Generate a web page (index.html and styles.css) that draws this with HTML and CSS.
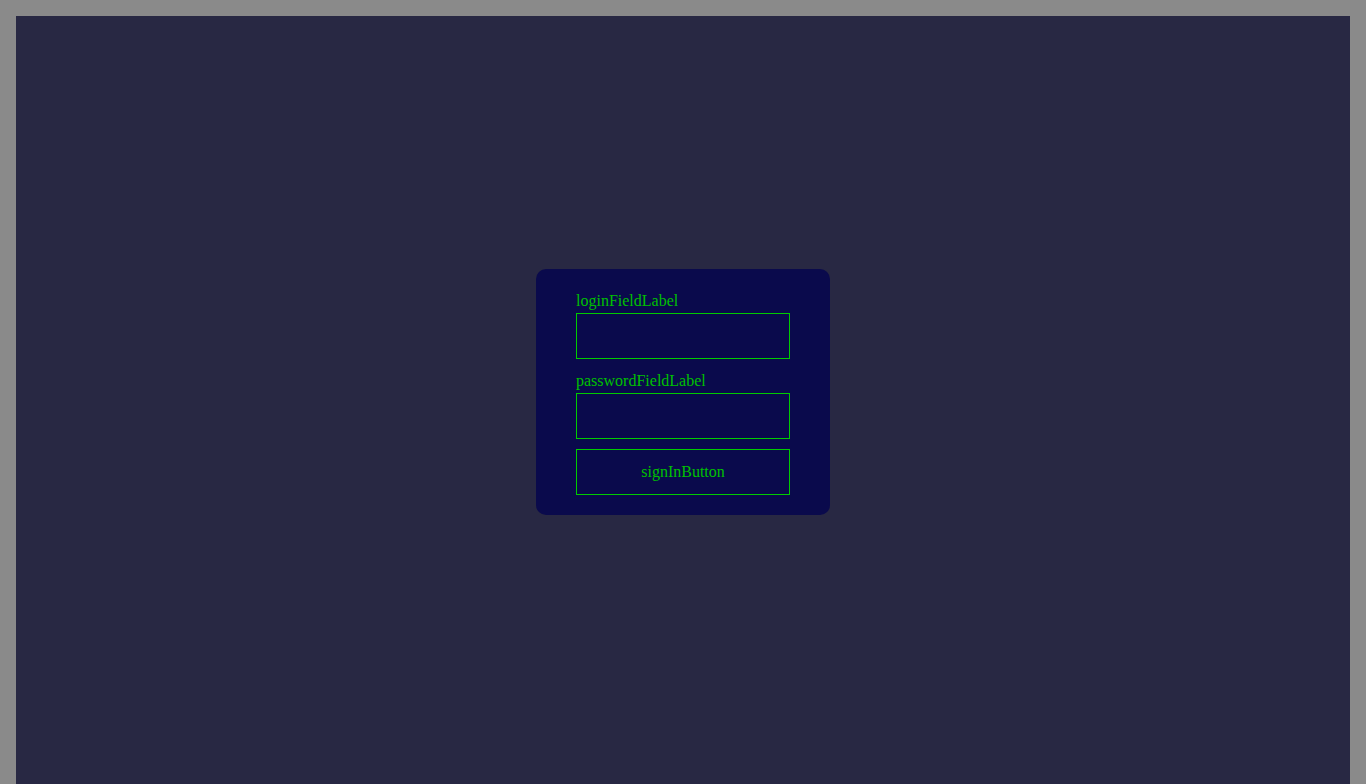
FILE: index.html
```html
<!DOCTYPE html>
<html lang="en">
<head>
<meta charset="utf-8">
<title>Sign in</title>
<link rel="stylesheet" href="styles.css">
</head>
<body>
<main class="panel">
  <form class="card">
    <label class="field-label" for="login">loginFieldLabel</label>
    <input class="field-input" id="login" type="text">
    <label class="field-label second" for="password">passwordFieldLabel</label>
    <input class="field-input" id="password" type="password">
    <button class="sign-in" type="button">signInButton</button>
  </form>
</main>
</body>
</html>
```

FILE: styles.css
```css
html, body {
  margin: 0;
  padding: 0;
}
body {
  background: #8a8a8a;
  padding: 16px 16px 0;
  height: 784px;
  box-sizing: border-box;
  overflow: hidden;
  font-family: "Liberation Serif", "Times New Roman", serif;
}
.panel {
  background: #282843;
  height: 768px;
  box-sizing: border-box;
  padding-bottom: 16px;
  display: flex;
  align-items: center;
  justify-content: center;
}
.card {
  background: #0a0a4c;
  border-radius: 10px;
  width: 294px;
  box-sizing: border-box;
  padding: 23px 40px 20px;
  display: flex;
  flex-direction: column;
}
.field-label {
  display: block;
  color: #00c000;
  font-size: 16px;
  line-height: 18px;
  margin-bottom: 3px;
}
.field-label.second {
  margin-top: 13px;
}
.field-input {
  display: block;
  box-sizing: border-box;
  width: 214px;
  height: 46px;
  margin: 0;
  border: 1px solid #00cc00;
  background: transparent;
  color: #00cc00;
  font: 16px "Liberation Serif", serif;
  padding: 0 8px;
  outline: none;
}
.sign-in {
  display: block;
  box-sizing: border-box;
  width: 214px;
  height: 46px;
  margin: 10px 0 0;
  border: 1px solid #00cc00;
  background: transparent;
  color: #00c000;
  font: 16px "Liberation Serif", serif;
  padding: 0;
  cursor: pointer;
}
```
